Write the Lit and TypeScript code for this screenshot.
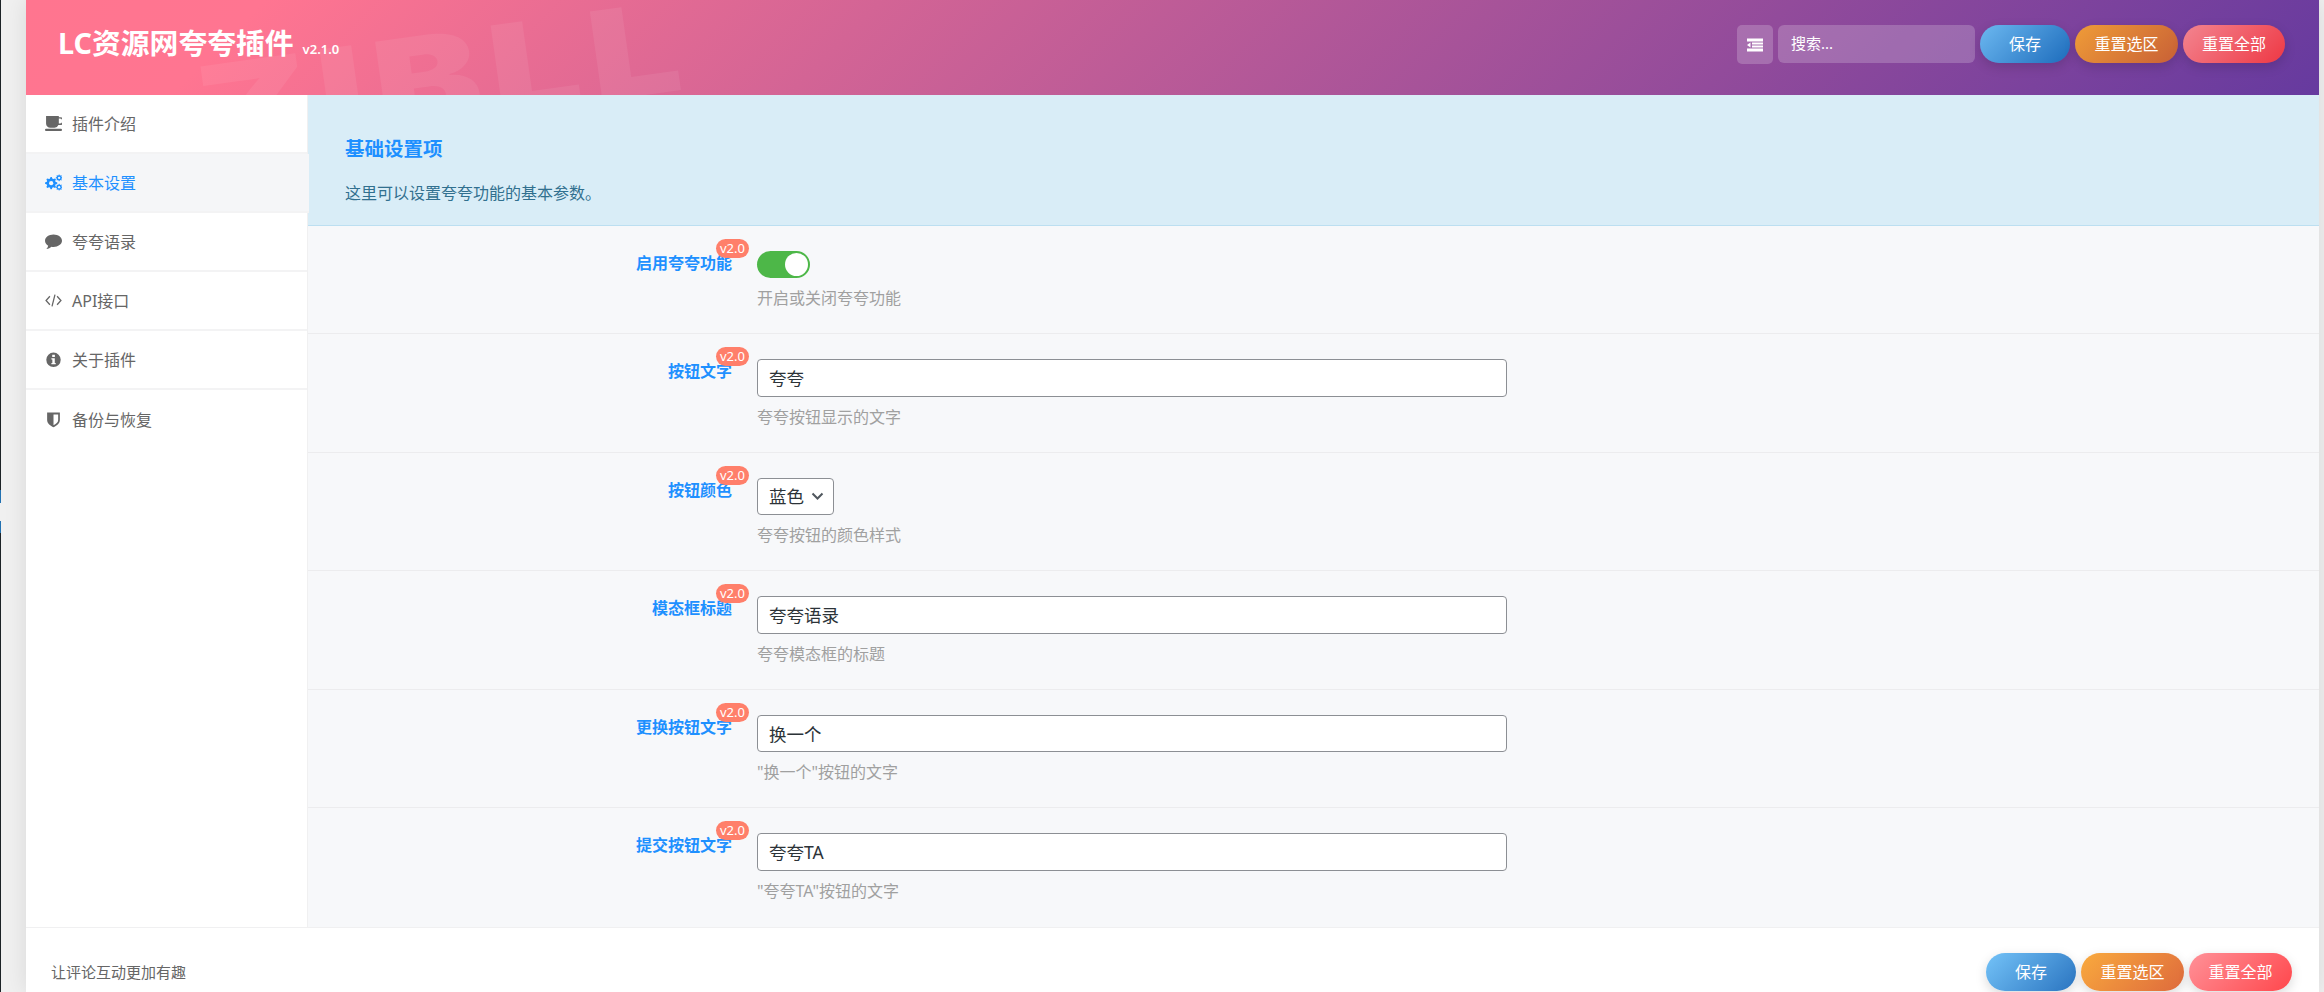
import { LitElement, html, css, svg } from "lit";
import { customElement } from "lit/decorators.js";

function gear(cx: number, cy: number, r: number, teeth: number) {
  const pts: string[] = [];
  const n = teeth * 4;
  for (let i = 0; i < n; i++) {
    const a = ((i - 0.5) / n) * Math.PI * 2;
    const rad = i % 4 < 2 ? r : r * 0.74;
    pts.push(`${(cx + rad * Math.cos(a)).toFixed(2)},${(cy + rad * Math.sin(a)).toFixed(2)}`);
  }
  return pts.join(" ");
}

const icons: Record<string, unknown> = {
  coffee: svg`<path d="M1 1h12v1h1.2a2.8 2.8 0 0 1 0 7.4H12.6A4 4 0 0 1 9 12H5a4 4 0 0 1-4-4z M13 3.4v4.6h.9a2.3 2.3 0 0 0 0-4.6z" fill-rule="evenodd"/><rect x="0" y="13" width="16" height="2" rx="1"/>`,
  cogs: svg`<polygon points="${gear(5.8, 8.6, 5.8, 8)}" fill-rule="evenodd"/><circle cx="5.8" cy="8.6" r="2" fill="var(--hole)"/><polygon points="${gear(13.3, 3.6, 3.2, 8)}"/><circle cx="13.3" cy="3.6" r="1.1" fill="var(--hole)"/><polygon points="${gear(13.3, 12.4, 3.2, 8)}"/><circle cx="13.3" cy="12.4" r="1.1" fill="var(--hole)"/>`,
  comment: svg`<path d="M8 1.5c4.4 0 8 2.6 8 5.8s-3.6 5.8-8 5.8c-.7 0-1.3 0-1.9-.2C4.9 14 3.3 14.8 1.3 15c.9-1 1.5-2 1.7-3.1C1.2 10.8 0 9.2 0 7.3 0 4.1 3.6 1.5 8 1.5z"/>`,
  code: svg`<path d="M4.6 4 1 8l3.6 4M11.4 4 15 8l-3.6 4M9.4 2.5 6.6 13.5" fill="none" stroke="currentColor" stroke-width="1.2"/>`,
  info: svg`<path fill-rule="evenodd" d="M8 1.5a6.8 6.8 0 1 1 0 13.6A6.8 6.8 0 0 1 8 1.5zM6.8 3.5v2.2h2.5V3.5zM6 6.8v1.3h.9v3.100H6v1.300h4.100v-1.300h-.9V6.800z"/>`,
  shield: svg`<path fill-rule="evenodd" d="M2 1.500h12v7c0 3.500-3.300 5.600-6 6.800-2.700-1.200-6-3.300-6-6.800zM8 3.200v10.200c2.200-1.100 4.400-2.700 4.400-4.900V3.200z"/>`,
};

const sideItems = [
  ["coffee", "插件介绍"],
  ["cogs", "基本设置"],
  ["comment", "夸夸语录"],
  ["code", "API接口"],
  ["info", "关于插件"],
  ["shield", "备份与恢复"],
];

type Row = { label: string; kind: "switch" | "select" | "input"; value?: string; hint: string };
const rows: Row[] = [
  { label: "启用夸夸功能", kind: "switch", hint: "开启或关闭夸夸功能" },
  { label: "按钮文字", kind: "input", value: "夸夸", hint: "夸夸按钮显示的文字" },
  { label: "按钮颜色", kind: "select", value: "蓝色", hint: "夸夸按钮的颜色样式" },
  { label: "模态框标题", kind: "input", value: "夸夸语录", hint: "夸夸模态框的标题" },
  { label: "更换按钮文字", kind: "input", value: "换一个", hint: "\"换一个\"按钮的文字" },
  { label: "提交按钮文字", kind: "input", value: "夸夸TA", hint: "\"夸夸TA\"按钮的文字" },
];

@customElement("app-root")
export class AppRoot extends LitElement {
  static styles = css`
    :host {
      display: flex;
      height: 100vh;
      overflow: hidden;
      background: #f0f0f0;
      font-family: "Noto Sans", "Noto Sans CJK SC", sans-serif;
      color: #555;
    }
    * { box-sizing: border-box; }
    .strip {
      flex: none;
      width: 1px;
      background: linear-gradient(
        to bottom,
        #1d2327 0 490px,
        #2271b1 490px 503px,
        #f0f0f0 503px 521px,
        #2271b1 521px 533px,
        #1d2327 533px
      );
    }
    .app {
      flex: none;
      width: 2293px;
      margin-left: 25px;
      display: flex;
      flex-direction: column;
      background: #fff;
      box-shadow: 0 0 22px rgba(0, 0, 0, 0.1);
    }
    header {
      flex: none;
      position: relative;
      height: 95px;
      overflow: hidden;
      display: flex;
      align-items: flex-start;
      justify-content: space-between;
      padding: 25px 34px 0 32px;
      background: linear-gradient(135deg, #ff758f 0%, #ff7591 10%, #663a9f 100%);
    }
    .mark {
      position: absolute;
      left: 164px;
      top: 51px;
      font: 900 124px/1 "Inter", sans-serif;
      letter-spacing: 7px;
      color: rgba(255, 255, 255, 0.07);
      transform: rotate(-8deg) scaleX(1.3);
      transform-origin: 0 0;
      pointer-events: none;
      user-select: none;
    }
    .title {
      position: relative;
      display: flex;
      align-items: baseline;
      gap: 9px;
      color: #fff;
      font-weight: 700;
      font-size: 28.8px;
      line-height: 36px;
    }
    .title small {
      font-size: 13px;
      font-weight: 600;
    }
    .tools {
      position: relative;
      display: flex;
      gap: 5px;
      align-items: flex-start;
    }
    .menu {
      width: 36px;
      height: 39px;
      border-radius: 5px;
      background: rgba(255, 255, 255, 0.2);
      display: flex;
      align-items: center;
      justify-content: center;
    }
    .search {
      width: 197px;
      height: 38px;
      padding: 0 12px 2px 13px;
      border: 0;
      border-radius: 6px;
      outline: 0;
      background: rgba(255, 255, 255, 0.2);
      color: #fff;
      font: 15px "Noto Sans", "Noto Sans CJK SC", sans-serif;
    }
    .search::placeholder { color: #fff; opacity: 1; }
    .btn {
      height: 38px;
      min-width: 90px;
      padding: 0 19.5px;
      border: 0;
      border-radius: 19px;
      color: #fff;
      font: 16px/38px "Noto Sans", "Noto Sans CJK SC", sans-serif;
      box-shadow: 0 4px 12px rgba(0, 0, 0, 0.15);
    }
    .tools .save { background: linear-gradient(135deg, #6cb8f0, #1d6cbc); }
    .tools .reset { background: linear-gradient(135deg, #ef9c38, #c86036); }
    .tools .all { background: linear-gradient(135deg, #f38590, #ee3844); padding: 0 19px; }
    footer .save { background: linear-gradient(135deg, #74c3f8, #2a74c0); }
    footer .reset { background: linear-gradient(135deg, #f9aa3e, #de6a3c); }
    footer .all { background: linear-gradient(135deg, #ff9198, #ff474c); }

    .main {
      flex: none;
      height: 833px;
      display: flex;
      border-bottom: 1px solid #f0f0f1;
    }
    nav {
      flex: none;
      width: 281px;
      background: #fff;
      position: relative;
      z-index: 1;
    }
    .item {
      height: 59px;
      width: 100%;
      display: flex;
      align-items: center;
      gap: 10px;
      padding: 0 0 1px 19px;
      border-bottom: 2px solid #f3f3f4;
      font-size: 16px;
      color: #666;
      --hole: #fff;
    }
    .item svg { flex: none; width: 17px; height: 17px; fill: currentColor; }
    .item.active {
      width: calc(100% + 2px);
      color: #1e90ff;
      background: #f5f6f8;
      --hole: #f5f6f8;
    }
    .item:last-child { border-bottom: 0; }
    section {
      flex: 1;
      min-width: 0;
      background: #f7f8fa;
      border-left: 1px solid #f0f0f1;
    }
    .info {
      height: 131px;
      padding: 40px 0 0 37px;
      background: #d9edf7;
      border-bottom: 1px solid #bcdff1;
      color: #31708f;
    }
    .info h2 {
      margin: 0 0 19px;
      font-size: 19.5px;
      line-height: 28px;
      font-weight: 700;
      color: #1e90ff;
    }
    .info p {
      margin: 0;
      font-size: 16px;
      line-height: 22px;
    }
    .row {
      display: grid;
      grid-template-columns: 424px 1fr;
      column-gap: 25px;
      padding-top: 25px;
      border-bottom: 1px solid #ececee;
    }
    .row:last-child { border-bottom: 0; }
    .label {
      justify-self: end;
      position: relative;
      height: 24px;
      font-size: 16px;
      line-height: 24px;
      font-weight: 600;
      color: #1e90ff;
    }
    .badge {
      position: absolute;
      right: -17px;
      top: -12px;
      width: 33px;
      height: 19px;
      border-radius: 10px;
      background: #ff7f6a;
      color: #fff;
      font-size: 13px;
      font-weight: 400;
      line-height: 19px;
      text-align: center;
    }
    .hint {
      margin-top: 9px;
      padding-bottom: 24px;
      font-size: 16px;
      line-height: 22px;
      color: #a0a0a0;
    }
    .field {
      display: block;
      width: 750px;
      height: 37.6px;
      padding: 0 11px 1px;
      border: 1px solid #8c8f94;
      border-radius: 4px;
      background: #fff;
      outline: 0;
      color: #2c3338;
      font: 17.5px "Noto Sans", "Noto Sans CJK SC", sans-serif;
    }
    .selectbox {
      position: relative;
      width: 77px;
      height: 37.6px;
    }
    .selectbox select {
      appearance: none;
      width: 100%;
      padding-right: 24px;
    }
    .selectbox svg {
      position: absolute;
      right: 10px;
      top: 14px;
      width: 13px;
      height: 9px;
      pointer-events: none;
    }
    .switch {
      width: 53px;
      height: 27px;
      margin-bottom: 1px;
      padding: 2px;
      display: flex;
      justify-content: flex-end;
      border-radius: 14px;
      background: #4db748;
    }
    .switch i {
      width: 23px;
      height: 23px;
      border-radius: 50%;
      background: #fff;
    }
    footer {
      flex: 1;
      display: flex;
      align-items: flex-start;
      justify-content: space-between;
      padding: 25px 27px 0 25px;
    }
    footer span {
      font-size: 15px;
      line-height: 38px;
      color: #666;
    }
    footer div { display: flex; gap: 5px; }
  `;

  buttons() {
    return html`<button class="btn save">保存</button><button class="btn reset">重置选区</button><button class="btn all">重置全部</button>`;
  }

  control(r: Row) {
    if (r.kind === "switch") return html`<div class="switch"><i></i></div>`;
    if (r.kind === "select")
      return html`<div class="selectbox">
        <select class="field"><option>${r.value}</option></select>
        <svg viewBox="0 0 13 9"><path d="M1.5 1.5 6.5 6.5 11.5 1.5" fill="none" stroke="#50575e" stroke-width="2"/></svg>
      </div>`;
    return html`<input class="field" .value=${r.value ?? ""} />`;
  }

  render() {
    return html`
      <div class="strip"></div>
      <div class="app">
        <header>
          <div class="mark">ZIBLL</div>
          <div class="title">LC资源网夸夸插件<small>v2.1.0</small></div>
          <div class="tools">
            <div class="menu">
              <svg width="16" height="14" viewBox="0 0 16 14" fill="#fff">
                <rect y="0.5" width="16" height="3" /><rect x="5" y="4.5" width="11" height="2" /><rect x="5" y="7.5" width="11" height="2" /><rect y="10.5" width="16" height="3" /><path d="M0 7 3.5 4.5v5z" />
              </svg>
            </div>
            <input class="search" placeholder="搜索..." />
            ${this.buttons()}
          </div>
        </header>
        <div class="main">
          <nav>
            ${sideItems.map(
              ([ic, t], i) => html`<div class="item ${i === 1 ? "active" : ""}">
                <svg viewBox="0 0 16 16">${icons[ic]}</svg><span>${t}</span>
              </div>`
            )}
          </nav>
          <section>
            <div class="info">
              <h2>基础设置项</h2>
              <p>这里可以设置夸夸功能的基本参数。</p>
            </div>
            ${rows.map(
              (r) => html`<div class="row">
                <div class="label">${r.label}<span class="badge">v2.0</span></div>
                <div>
                  ${this.control(r)}
                  <div class="hint">${r.hint}</div>
                </div>
              </div>`
            )}
          </section>
        </div>
        <footer>
          <span>让评论互动更加有趣</span>
          <div>${this.buttons()}</div>
        </footer>
      </div>
    `;
  }
}
